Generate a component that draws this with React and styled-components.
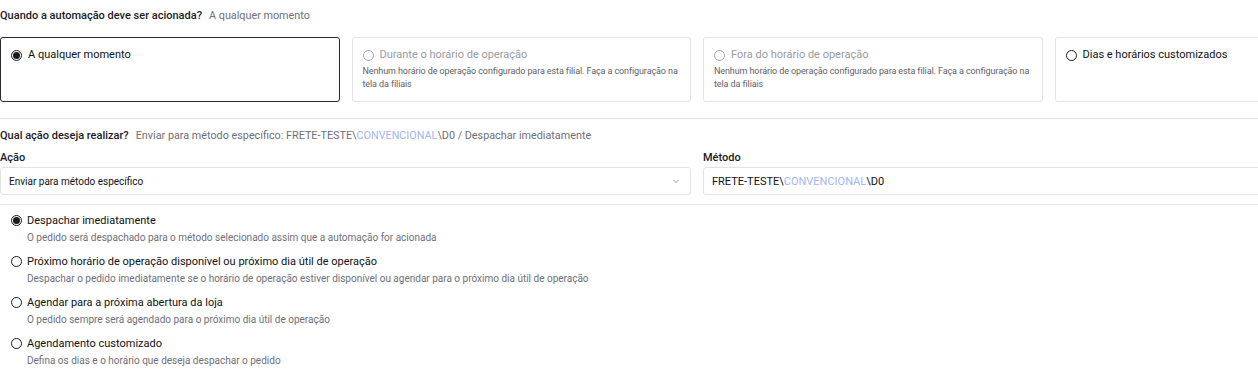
import React from "react";
import styled, { createGlobalStyle } from "styled-components";

const Global = createGlobalStyle`
  html, body { margin: 0; padding: 0; background: #fff; overflow: hidden; }
  body { font-family: Roboto, "Noto Sans", Arial, sans-serif; color: #1b1b1f; }
  * { box-sizing: border-box; }
`;

const Page = styled.div`
  width: 1394px;
  padding-top: 9px;
`;

const Heading = styled.div`
  display: flex;
  align-items: baseline;
  gap: 7px;
  font-size: 11px;
  line-height: 14px;
  font-weight: 500;
  color: #1b1b1f;
`;

const Answer = styled.span`
  font-weight: 400;
  font-size: 10.8px;
  color: #6f6f78;
`;

const Blue = styled.span`
  color: #a3b5f3;
`;

const CardGrid = styled.div`
  display: grid;
  grid-template-columns: repeat(4, 1fr);
  gap: 12px;
  margin-top: 14px;
`;

const Card = styled.div`
  height: 65px;
  border: 1px solid ${(p) => (p.$selected ? "#2a2a2e" : "#e3e3e6")};
  border-radius: 3px;
  padding: 10px 10px;
`;

const CardTitle = styled.div`
  display: flex;
  align-items: center;
  gap: 6px;
  font-size: 11px;
  line-height: 14px;
  font-weight: 400;
  color: ${(p) => (p.$disabled ? "#9a9aa0" : "#111114")};
`;

const CardDesc = styled.div`
  margin-top: 3px;
  font-size: 9px;
  letter-spacing: -0.1px;
  line-height: 13px;
  color: #5f5f68;
`;

const Radio = styled.span`
  flex: none;
  width: 11px;
  height: 11px;
  border-radius: 50%;
  border: 1px solid ${(p) => (p.$disabled ? "#a8a8ae" : "#1b1b1f")};
  display: inline-flex;
  align-items: center;
  justify-content: center;
  &::after {
    content: "";
    display: ${(p) => (p.$checked ? "block" : "none")};
    width: 7px;
    height: 7px;
    border-radius: 50%;
    background: #1b1b1f;
  }
`;

const Divider = styled.hr`
  border: 0;
  border-top: 1px solid #e4e4e7;
  margin: ${(p) => p.$margin || "16px 0 10px"};
`;

const FormRow = styled.div`
  display: grid;
  grid-template-columns: 1fr 1fr;
  gap: 12px;
  margin-top: 8px;
`;

const Field = styled.div`
  display: flex;
  flex-direction: column;
  gap: 2px;
`;

const Label = styled.div`
  font-size: 11px;
  line-height: 14px;
  font-weight: 500;
  color: #1b1b1f;
`;

const InputBox = styled.div`
  height: 28px;
  border: 1px solid #e3e3e6;
  border-radius: 3px;
  display: flex;
  align-items: center;
  justify-content: space-between;
  padding: 0 10px 0 8px;
  font-size: ${(p) => (p.$large ? "11px" : "10px")};
  color: #111114;
`;

const Chevron = styled.svg`
  width: 8px;
  height: 8px;
  color: #9a9aa0;
`;

const OptionList = styled.div`
  display: flex;
  flex-direction: column;
  gap: 11px;
  padding-left: 11px;
  margin-top: 9px;
`;

const Option = styled.div`
  display: flex;
  flex-direction: column;
  gap: 5px;
`;

const OptionTitle = styled.div`
  display: flex;
  align-items: center;
  gap: 5px;
  font-size: 11px;
  line-height: 13px;
  font-weight: 400;
  color: #111114;
`;

const OptionDesc = styled.div`
  padding-left: 16px;
  font-size: 10px;
  line-height: 12px;
  color: #6f6f78;
`;

const cards = [
  { title: "A qualquer momento", selected: true },
  {
    title: "Durante o horário de operação",
    disabled: true,
    desc: "Nenhum horário de operação configurado para esta filial. Faça a configuração na tela da filiais",
  },
  {
    title: "Fora do horário de operação",
    disabled: true,
    desc: "Nenhum horário de operação configurado para esta filial. Faça a configuração na tela da filiais",
  },
  { title: "Dias e horários customizados" },
];

const options = [
  {
    title: "Despachar imediatamente",
    desc: "O pedido será despachado para o método selecionado assim que a automação for acionada",
    checked: true,
  },
  {
    title: "Próximo horário de operação disponível ou próximo dia útil de operação",
    desc: "Despachar o pedido imediatamente se o horário de operação estiver disponível ou agendar para o próximo dia útil de operação",
  },
  {
    title: "Agendar para a próxima abertura da loja",
    desc: "O pedido sempre será agendado para o próximo dia útil de operação",
  },
  {
    title: "Agendamento customizado",
    desc: "Defina os dias e o horário que deseja despachar o pedido",
  },
];

export default function App() {
  return (
    <>
      <Global />
      <Page>
        <Heading>
          Quando a automação deve ser acionada?
          <Answer>A qualquer momento</Answer>
        </Heading>
        <CardGrid>
          {cards.map((c) => (
            <Card key={c.title} $selected={c.selected}>
              <CardTitle $disabled={c.disabled}>
                <Radio $checked={c.selected} $disabled={c.disabled} />
                {c.title}
              </CardTitle>
              {c.desc && <CardDesc>{c.desc}</CardDesc>}
            </Card>
          ))}
        </CardGrid>
        <Divider />
        <Heading>
          Qual ação deseja realizar?
          <Answer>
            Enviar para método específico: FRETE-TESTE\<Blue>CONVENCIONAL</Blue>\D0 / Despachar imediatamente
          </Answer>
        </Heading>
        <FormRow>
          <Field>
            <Label>Ação</Label>
            <InputBox>
              Enviar para método específico
              <Chevron viewBox="0 0 8 8" fill="none">
                <path d="M1.5 3l2.5 2.5L6.5 3" stroke="currentColor" strokeWidth="1" />
              </Chevron>
            </InputBox>
          </Field>
          <Field>
            <Label>Método</Label>
            <InputBox $large>
              <span>
                FRETE-TESTE\<Blue>CONVENCIONAL</Blue>\D0
              </span>
            </InputBox>
          </Field>
        </FormRow>
        <Divider $margin="9px 0 0" />
        <OptionList>
          {options.map((o) => (
            <Option key={o.title}>
              <OptionTitle>
                <Radio $checked={o.checked} />
                {o.title}
              </OptionTitle>
              <OptionDesc>{o.desc}</OptionDesc>
            </Option>
          ))}
        </OptionList>
      </Page>
    </>
  );
}
